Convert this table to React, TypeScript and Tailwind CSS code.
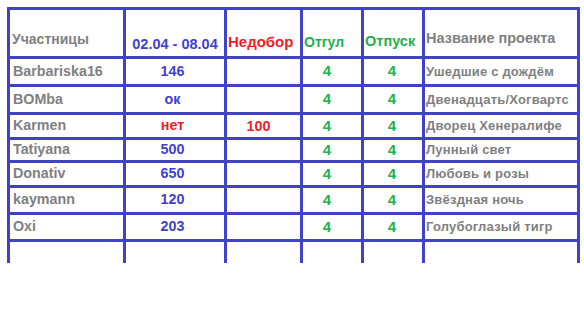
const LINE = 'bg-[#4042c8]';

type Row = {
  name: string;
  week: string;
  weekRed?: boolean;
  short?: string;
  otgul: string;
  otpusk: string;
  project: string;
  h: string;
};

const ROWS: Row[] = [
  { name: 'Barbariska16', week: '146', otgul: '4', otpusk: '4', project: 'Ушедшие с дождём', h: 'h-[25px]' },
  { name: 'BOMba', week: 'ок', otgul: '4', otpusk: '4', project: 'Двенадцать/Хогвартс', h: 'h-[25px]' },
  { name: 'Karmen', week: 'нет', weekRed: true, short: '100', otgul: '4', otpusk: '4', project: 'Дворец Хенералифе', h: 'h-[22px]' },
  { name: 'Tatiyana', week: '500', otgul: '4', otpusk: '4', project: 'Лунный свет', h: 'h-[20px]' },
  { name: 'Donativ', week: '650', otgul: '4', otpusk: '4', project: 'Любовь и розы', h: 'h-[22px]' },
  { name: 'kaymann', week: '120', otgul: '4', otpusk: '4', project: 'Звёздная ночь', h: 'h-[24px]' },
  { name: 'Oxi', week: '203', otgul: '4', otpusk: '4', project: 'Голубоглазый тигр', h: 'h-[24px]' },
];

const cell = 'bg-white flex items-center overflow-hidden whitespace-nowrap';

export default function App() {
  return (
    <div
      className="w-[584px] h-[309px] bg-white pl-[7px] pt-[7px]"
      style={{ fontFamily: '"Liberation Sans", Arial, sans-serif' }}
    >
      <div
        className={`${LINE} grid grid-cols-[113px_98px_73px_58px_58px_152px] gap-[3px] p-[3px] pb-0 w-[573px] font-bold`}
      >
        {/* header */}
        <div className={`${cell} h-[46px] items-start pt-[19px] pl-[2px] text-[14px] text-[#7f7f7f]`}>Участницы</div>
        <div className={`${cell} h-[46px] items-start justify-center pt-[24px] text-[14.5px] text-[#3f3fcf]`}>02.04 - 08.04</div>
        <div className={`${cell} h-[46px] items-start pt-[21px] pl-[1px] text-[15px] text-[#f01c28]`}>Недобор</div>
        <div className={`${cell} h-[46px] items-start pt-[22px] pl-[1px] text-[14px] text-[#22b14c]`}>Отгул</div>
        <div className={`${cell} h-[46px] items-start pt-[21px] pl-[1px] text-[14.5px] text-[#22b14c]`}>Отпуск</div>
        <div className={`${cell} h-[46px] items-start pt-[18px] pl-[1px] text-[14.5px] text-[#7f7f7f]`}>Название проекта</div>

        {ROWS.map((r) => (
          <>
            <div key={r.name + 'n'} className={`${cell} ${r.h} pl-[3px] text-[14.3px] text-[#7f7f7f]`}>{r.name}</div>
            <div
              key={r.name + 'w'}
              className={`${cell} ${r.h} justify-center pr-[5px] text-[14.3px] ${r.weekRed ? 'text-[#f01c28]' : 'text-[#3f3fcf]'}`}
            >
              {r.week}
            </div>
            <div key={r.name + 's'} className={`${cell} ${r.h} justify-center pr-[10px] pt-[2px] text-[14.3px] text-[#f01c28]`}>
              {r.short ?? ''}
            </div>
            <div key={r.name + 'g'} className={`${cell} ${r.h} justify-center pr-[10px] text-[15px] text-[#22b14c]`}>{r.otgul}</div>
            <div key={r.name + 'p'} className={`${cell} ${r.h} justify-center pr-[2px] text-[15px] text-[#22b14c]`}>{r.otpusk}</div>
            <div key={r.name + 'j'} className={`${cell} ${r.h} pl-[1px] text-[13px] tracking-[0.2px] text-[#7f7f7f]`}>{r.project}</div>
          </>
        ))}

        {/* empty last row, cut off */}
        <div className={`${cell} h-[21px]`} />
        <div className={`${cell} h-[21px]`} />
        <div className={`${cell} h-[21px]`} />
        <div className={`${cell} h-[21px]`} />
        <div className={`${cell} h-[21px]`} />
        <div className={`${cell} h-[21px]`} />
      </div>
    </div>
  );
}
